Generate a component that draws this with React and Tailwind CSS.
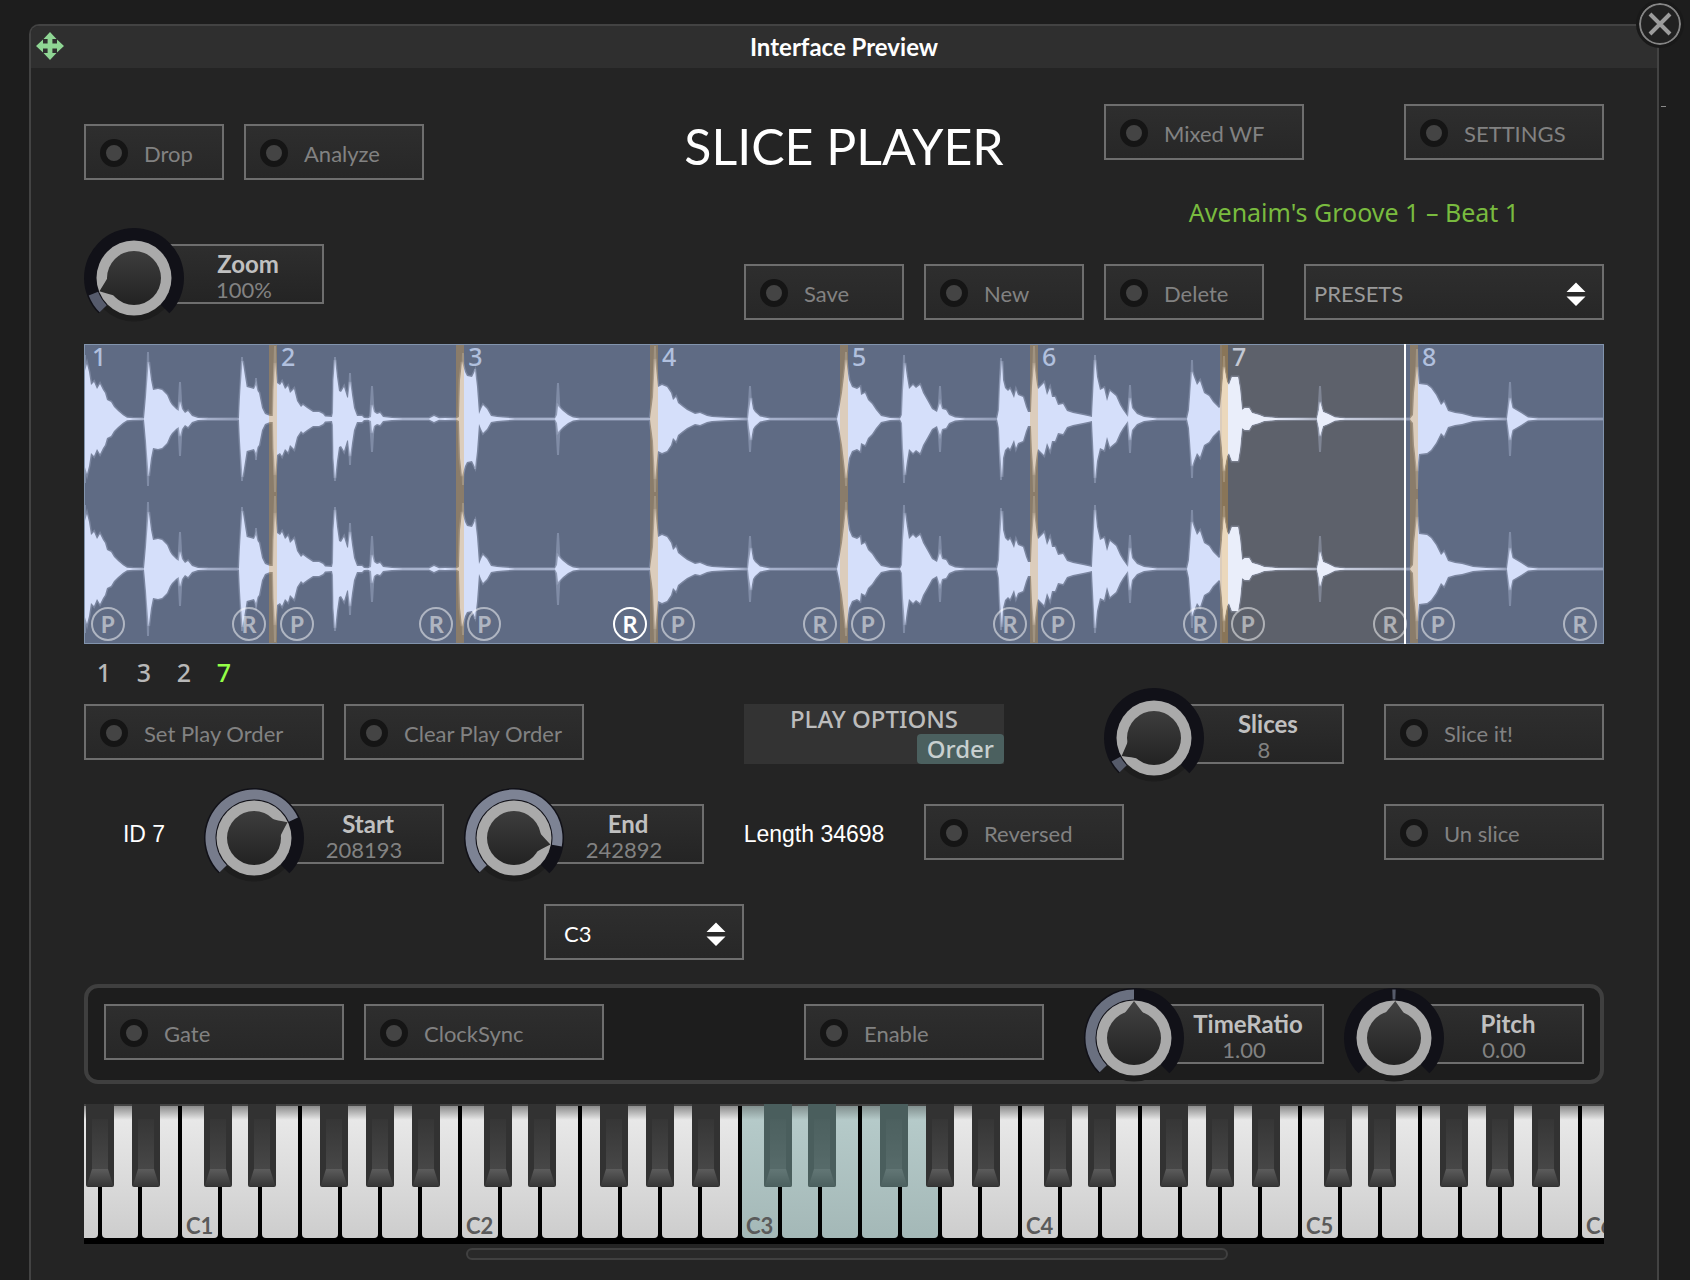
import React, { useState } from 'react';

// [x, height] pairs of the sample overview, in a 1520 wide space
const WAVE = [
  [0, 45], [3, 55], [5, 47], [7, 34], [10, 37], [13, 30], [16, 35], [19, 29], [21, 26], [23, 19], [27, 17], [30, 12], [34, 8], [39, 3.7], [43, 1.3], [49, 0.8], [58, 0.5],
  [60, 0.5], [62, 22], [64.7, 57], [67, 39], [69, 29], [74, 30], [78, 29], [83, 24], [86, 17], [88, 14], [92, 10], [94.7, 8], [96, 17], [98, 10], [101, 6], [104, 8], [108, 3], [114, 1], [124, 0.5], [153, 0.3],
  [155, 0.5], [156, 22], [158.5, 58], [160, 49], [162.7, 32], [170, 30], [172, 34], [173.5, 28], [175, 26], [178, 11], [181, 5], [186, 3], [189, 3], [189.5, 29], [191, 56], [193, 36], [196, 34], [198, 37], [201, 30], [204, 33], [206, 26], [210, 30], [213, 18], [217, 12], [219, 14], [223, 11], [229, 7], [235, 7], [239, 5], [241, 2.5], [248, 2],
  [249, 6], [249.5, 39], [251, 59], [253, 42], [255, 28], [257, 27], [260, 32], [263, 22], [264, 21], [266, 37], [268, 24], [270, 11], [273, 3], [278, 3], [280, 1], [284, 0.8], [287, 2], [288, 14], [290, 7], [293, 5], [296, 6], [299, 2], [308, 1], [319, 0.4], [345, 0.4], [350, 3], [355, 0.8], [361, 1], [372, 0.6],
  [375, 2], [376, 39], [378, 57], [381, 47], [383, 43], [388, 42], [391, 48], [393, 32], [395, 5], [397, 10], [399, 14], [403, 10], [407, 3], [413, 2], [419, 1.5], [431, 0.5], [471, 0.4], [473, 4], [474, 13], [479, 8], [484, 4], [489, 1.5], [496, 0.6],
  [566, 0.4], [569, 22], [571, 60], [574, 32], [578, 34], [583, 32], [587, 26], [589, 19], [592, 22], [594, 16], [599, 12], [603, 9], [607, 7], [611, 5], [616, 6], [623, 3], [628, 2], [641, 1.2], [658, 0.6], [664, 0.3], [665, 9], [667, 21], [669, 10], [671, 7], [676, 2.5], [686, 0.6],
  [753, 0.3], [755, 9], [758, 26], [762, 59], [765, 39], [768, 32], [773, 30], [776, 32], [777, 24], [781, 26], [784, 19], [788, 15], [792, 9], [797, 3], [806, 1], [816, 0.5], [818, 4], [819, 29], [821, 56], [823, 42], [825, 30], [829, 34], [832, 31], [836, 34], [839, 26], [843, 19], [848, 10], [853, 7], [856, 16], [858, 10], [862, 9], [865, 4], [871, 1.5], [881, 0.5],
  [913, 0.3], [915, 9], [916, 32], [918, 58], [919, 39], [921, 31], [924, 28], [926, 30], [930, 21], [932, 29], [934, 24], [939, 22], [942, 12], [944, 7], [947, 7], [948, 32], [950, 56], [953, 34], [954, 30], [960, 36], [963, 24], [966, 31], [968, 22], [971, 22], [974, 14], [979, 15], [983, 8], [989, 6], [999, 4], [1006, 2.5],
  [1008, 2], [1009, 22], [1011, 59], [1013, 42], [1016, 29], [1020, 31], [1023, 18], [1026, 28], [1032, 23], [1036, 14], [1039, 9], [1044, 2], [1046, 21], [1048, 11], [1053, 5], [1060, 2], [1073, 0.5], [1103, 0.3], [1105, 9], [1108, 47], [1113, 34], [1116, 38], [1120, 26], [1125, 23], [1129, 17], [1135, 11],
  [1136, 12], [1138, 29], [1140, 52], [1143, 37], [1145, 34], [1148, 42], [1154, 42], [1156, 30], [1158, 9], [1161, 11], [1165, 11], [1168, 6], [1175, 4], [1180, 2], [1194, 0.8], [1233, 0.3], [1235, 9], [1236, 17], [1239, 7], [1244, 5], [1251, 1.5], [1261, 0.5],
  [1326, 0.3], [1329, 4], [1330, 26], [1333, 52], [1335, 35], [1343, 34], [1347, 31], [1352, 24], [1357, 14], [1360, 17], [1364, 8], [1371, 6], [1378, 5], [1389, 2], [1402, 1], [1423, 0.3], [1426, 21], [1428.5, 11], [1437, 6], [1444, 1.5], [1454, 0.5], [1520, 0.3],
];

// peaks that stick out of the body, [x, height]
const PEAKS = [
  [1, 64], [64, 67], [96, 37], [158, 62], [172, 41], [191, 73], [251, 62], [266, 46], [288, 33], [379, 66], [391, 50],
  [474, 36], [571, 73], [666, 33], [762, 67], [820, 64], [856, 33], [917, 61], [950, 73], [1011, 64],
  [1046, 34], [1108, 59], [1140, 63], [1236, 33], [1333, 70], [1426, 37],
];

// share of the whole sample that each slice takes
const SLICES = [
  { id: 1, size: 189 },
  { id: 2, size: 187 },
  { id: 3, size: 194, reversed: true },
  { id: 4, size: 190 },
  { id: 5, size: 190 },
  { id: 6, size: 190 },
  { id: 7, size: 190, playing: true },
  { id: 8, size: 190 },
];

const MARKERS = [189, 376, 570, 760, 950, 1140, 1330];

function wavePath(center) {
  const top = WAVE.map(([x, h]) => `${x},${center - h}`);
  const bottom = [...WAVE].reverse().map(([x, h]) => `${x},${center + h}`);
  return `M${top.join(' L')} L${bottom.join(' L')} Z`;
}

function peakPath(center) {
  return PEAKS.map(([x, h]) => (
    `M${x - 3},${center} L${x - 1},${center - h} L${x + 1},${center - h} L${x + 3},${center} L${x + 1},${center + h} L${x - 1},${center + h} Z`
  )).join(' ');
}

function polar(deg, r) {
  const a = (deg * Math.PI) / 180;
  return [50 + r * Math.sin(a), 50 - r * Math.cos(a)];
}

function arcPath(from, to, r1, r2) {
  const large = to - from > 180 ? 1 : 0;
  return `M${polar(from, r2)} A${r2} ${r2} 0 ${large} 1 ${polar(to, r2)} L${polar(to, r1)} A${r1} ${r1} 0 ${large} 0 ${polar(from, r1)} Z`;
}

function LedButton({ children, className }) {
  return (
    <button
      type="button"
      className={`flex h-14 shrink-0 items-center border-2 border-[#6e6e6e] bg-linear-to-b from-[#2e2e2e] to-[#272727] pt-1 pb-0.5 pl-3.5 text-[22px] leading-[26px] whitespace-nowrap text-[#828282] ${className}`}
    >
      <span className="mr-4 size-7 rounded-full border-6 border-[#151515] bg-[#444444]" />
      <span className="pt-0.5">{children}</span>
    </button>
  );
}

function Knob({ id, label, text, angle, from = -135, color, value }) {
  const [current, setCurrent] = useState(value);
  const tip = polar(angle, 37);
  const notch = `M${tip} Q${polar(angle - 13, 29)} ${polar(angle - 23, 26)} L50,50 L${polar(angle + 23, 26)} Q${polar(angle + 13, 29)} ${tip} Z`;

  return (
    <div className="relative h-[60px] w-60 shrink-0">
      <div className="ml-[50px] flex h-full flex-col items-center border-2 border-[#6e6e6e] bg-linear-to-b from-[#2e2e2e] to-[#242424] pt-[5px] pl-[30px]">
        <label htmlFor={id} className="pl-2 text-[24px] leading-[26px] font-bold text-[#c0c0c0]">{label}</label>
        <output htmlFor={id} className="text-[22px] leading-[26px] text-[#828282]">{text}</output>
      </div>
      <svg viewBox="0 0 100 100" className="absolute -top-4 left-0 size-[100px]" aria-hidden="true">
        <defs>
          <linearGradient id={`${id}-body`} gradientUnits="userSpaceOnUse" x1="0" y1="13" x2="0" y2="78">
            <stop offset="0" stopColor="#424242" />
            <stop offset="1" stopColor="#222222" />
          </linearGradient>
        </defs>
        <circle cx="50" cy="50" r="43.5" fill="#1d1d1d" />
        <path d={arcPath(-135, 135, 36, 50)} fill="#111118" />
        <path d={arcPath(from, angle, 38.5, 48.5)} fill={color} />
        <circle cx="50" cy="50" r="37.5" fill="#aaaaaa" />
        <circle cx="50" cy="50" r="27" fill={`url(#${id}-body)`} />
        <path d={notch} fill={`url(#${id}-body)`} />
      </svg>
      <input
        id={id}
        type="range"
        min="0"
        max="100"
        value={current}
        onChange={(e) => setCurrent(Number(e.target.value))}
        className="absolute -top-4 left-0 size-[100px] cursor-pointer opacity-0"
      />
    </div>
  );
}

function Dropdown({ label, options, className, selectClass }) {
  return (
    <div className={`relative h-14 shrink-0 ${className}`}>
      <select
        aria-label={label}
        className={`size-full appearance-none border-2 border-[#6e6e6e] bg-linear-to-b from-[#2e2e2e] to-[#272727] pt-0.5 text-[22px] ${selectClass}`}
      >
        {options.map((o) => <option key={o}>{o}</option>)}
      </select>
      <svg viewBox="0 0 20 24" className="pointer-events-none absolute top-[18px] right-[18px] h-6 w-5" aria-hidden="true">
        <path d="M10 0.5 L19.5 10 H0.5 Z M0.5 14.5 H19.5 L10 24 Z" fill="#ffffff" />
      </svg>
    </div>
  );
}

function SliceTag({ letter, on }) {
  return (
    <button
      type="button"
      className={`flex size-[34px] items-center justify-center rounded-full border-2 font-['Noto_Sans',sans-serif] text-[24px] leading-[30px] font-semibold ${on ? 'border-white text-white' : 'border-white/50 text-white/50'}`}
    >
      {letter}
    </button>
  );
}

function Waveform() {
  return (
    <div className="relative mt-4 h-[300px] bg-[#5f6b84]">
      <svg viewBox="0 0 1520 300" preserveAspectRatio="none" className="block size-full" aria-hidden="true">
        <rect x="1138" y="0" width="183" height="300" fill="#5d616b" />
        {[75, 225].map((center) => (
          <g key={center}>
            <path d={peakPath(center)} fill="#d5dffa" fillOpacity="0.28" />
            <path d={wavePath(center)} fill="none" stroke="#d5dffa" strokeOpacity="0.22" strokeWidth="3" />
            <path d={wavePath(center)} fill="#d5dffa" />
          </g>
        ))}
        <g clipPath="url(#playing)">
          <path d={wavePath(75)} fill="#eaeefa" />
          <path d={wavePath(225)} fill="#eaeefa" />
        </g>
        <clipPath id="playing">
          <rect x="1138" y="0" width="183" height="300" />
        </clipPath>
        {MARKERS.map((x) => (
          <rect key={x} x={x - 4} y="0" width="8" height="300" fill="#f0a52d" fillOpacity="0.3" />
        ))}
        <rect x="0.5" y="0.5" width="1519" height="299" fill="none" stroke="#8294ad" />
        <rect x="1320" y="0" width="2" height="300" fill="#ffffff" />
      </svg>
      <div className="absolute inset-0 flex">
        {SLICES.map((s) => (
          <div key={s.id} className="flex basis-0 flex-col justify-between px-[7px] pb-[3px]" style={{ flexGrow: s.size }}>
            <span className={`pl-px font-['Noto_Sans',sans-serif] text-[25px] leading-[24px] font-medium ${s.playing ? 'text-[#c3c8d4]' : 'text-[#b1c0de]'}`}>{s.id}</span>
            <div className="flex justify-between">
              <SliceTag letter="P" />
              <SliceTag letter="R" on={s.reversed} />
            </div>
          </div>
        ))}
      </div>
    </div>
  );
}

// left edge of the black key, measured from the left edge of its white key
const BLACK_OFFSET = { C: 24, D: 28, F: 20, G: 26, A: 32 };

const WHITE_KEYS = ['G0', 'A0', 'B0'];
for (let octave = 1; octave <= 5; octave += 1) {
  ['C', 'D', 'E', 'F', 'G', 'A', 'B'].forEach((n) => WHITE_KEYS.push(n + octave));
}
WHITE_KEYS.push('C6');

const MAPPED_WHITE = ['C3', 'D3', 'E3', 'F3', 'G3'];
const MAPPED_BLACK = ['C3', 'D3', 'F3'];

function BlackKey({ note, mapped }) {
  return (
    <button
      type="button"
      aria-label={`${note} sharp`}
      className="absolute -top-0.5 z-10 h-[83px] w-7"
      style={{ left: BLACK_OFFSET[note[0]] }}
    >
      <svg viewBox="0 0 28 83" className="block h-[83px] w-7" aria-hidden="true">
        <path d="M0 0 H28 V81 Q28 83 26 83 H2 Q0 83 0 81 Z" fill="#323232" />
        <rect x="6" y="15" width="16" height="50" fill="url(#blackTop)" />
        <path d="M6 65 H22 L27 81 Q27 82 26 82 H2 Q1 82 1 81 Z" fill="url(#blackFront)" />
        {mapped && <path d="M0 0 H28 V81 Q28 83 26 83 H2 Q0 83 0 81 Z" fill="#6d9d9b" fillOpacity="0.41" />}
      </svg>
    </button>
  );
}

function Keyboard() {
  return (
    <div className="mt-5 h-[140px] overflow-hidden bg-black">
      <svg className="absolute size-0" aria-hidden="true">
        <defs>
          <linearGradient id="blackTop" x1="0" y1="0" x2="0" y2="1">
            <stop offset="0" stopColor="#363636" />
            <stop offset="1" stopColor="#474747" />
          </linearGradient>
          <linearGradient id="blackFront" x1="0" y1="0" x2="0" y2="1">
            <stop offset="0" stopColor="#5c5c5c" />
            <stop offset="1" stopColor="#373737" />
          </linearGradient>
        </defs>
      </svg>
      <div className="-ml-6 flex border-t-2 border-[#444444]">
        {WHITE_KEYS.map((note) => (
          <div key={note} className="relative h-[132px] w-10 shrink-0 px-0.5">
            <button
              type="button"
              aria-label={note}
              className={`flex size-full items-end justify-start rounded-b-[4px] pl-1 text-[22px] leading-[24px] font-bold text-[#5a5a5a] ${MAPPED_WHITE.includes(note)
                ? 'bg-[linear-gradient(#82908f,#b5cac9_14px,#a4b8b7)]'
                : 'bg-[linear-gradient(#8c8c8c,#e8e8e8_14px,#cdcdcd)]'}`}
            >
              {note[0] === 'C' && note}
            </button>
            {BLACK_OFFSET[note[0]] && note !== 'C6' && (
              <BlackKey note={note} mapped={MAPPED_BLACK.includes(note)} />
            )}
          </div>
        ))}
      </div>
    </div>
  );
}

function App() {
  return (
    <div className="relative flex min-h-screen flex-col overflow-hidden bg-[#1d1d1d] pt-6 pr-[31px] pl-[29px] font-['Lato',sans-serif]">
      <div className="relative flex grow flex-col rounded-t-[10px] border-2 border-b-0 border-[#434343] bg-[#242424]">
        <header className="relative flex h-[42px] items-center justify-center rounded-t-lg bg-[#2f2f2f]">
          <button type="button" aria-label="Move" className="absolute top-1.5 left-[5px]">
            <svg viewBox="0 0 28 28" className="size-7" aria-hidden="true">
              <path
                d="M14 0 L20.5 7 H16.4 V11.6 H21 V7.5 L28 14 L21 20.5 V16.4 H16.4 V21 H20.5 L14 28 L7.5 21 H11.6 V16.4 H7 V20.5 L0 14 L7 7.5 V11.6 H11.6 V7 H7.5 Z"
                fill="#8fd694"
              />
            </svg>
          </button>
          <h2 className="text-[24px] leading-[28px] font-bold text-white">Interface Preview</h2>
        </header>

        <main className="px-[53px] pt-9">
          <div className="grid grid-cols-[1fr_auto_1fr]">
            <div className="flex gap-5 pt-5">
              <LedButton className="w-[140px]">Drop</LedButton>
              <LedButton className="w-[180px]">Analyze</LedButton>
            </div>
            <h1 className="pt-3 text-[50px] leading-[60px] text-white">SLICE PLAYER</h1>
            <div className="flex justify-end gap-[100px]">
              <LedButton className="w-[200px]">Mixed WF</LedButton>
              <LedButton className="w-[200px]">SETTINGS</LedButton>
            </div>
          </div>

          <div className="flex justify-between">
            <div className="pt-16">
              <Knob id="zoom" label="Zoom" text="100%" angle={-111} value={9} color="#565b6c" />
            </div>
            <div className="flex flex-col pt-[18px] pb-2">
              <p className="w-[500px] self-end text-center font-['Noto_Sans',sans-serif] text-[25px] leading-[28px] text-[#79bb3f]">
                Avenaim's Groove 1 – Beat 1
              </p>
              <div className="mt-[38px] flex gap-5">
                <LedButton className="w-40">Save</LedButton>
                <LedButton className="w-40">New</LedButton>
                <LedButton className="w-40">Delete</LedButton>
                <Dropdown label="Presets" options={['PRESETS']} className="ml-5 w-[300px]" selectClass="pl-2 text-[#9a9a9a]" />
              </div>
            </div>
          </div>

          <Waveform />

          <ol className="mt-3.5 flex h-[30px] font-['Noto_Sans',sans-serif] text-[25px] leading-[28px] font-medium text-[#b8b8b8]">
            <li className="w-10 text-center">1</li>
            <li className="w-10 text-center">3</li>
            <li className="w-10 text-center">2</li>
            <li className="w-10 text-center text-[#94ff47]">7</li>
          </ol>

          <div className="mt-4 flex h-[60px]">
            <div className="flex gap-5">
              <LedButton className="w-60">Set Play Order</LedButton>
              <LedButton className="w-60">Clear Play Order</LedButton>
            </div>
            <div className="ml-40 flex w-[260px] flex-col bg-[#333333] font-['Noto_Sans',sans-serif] text-[24px] leading-[30px] font-medium">
              <span className="text-center text-[#bcbcbc]">PLAY OPTIONS</span>
              <button type="button" className="self-end rounded-[4px] bg-[#4b605f] px-2.5 text-[#c8d0d0]">Order</button>
            </div>
            <div className="ml-auto flex gap-10">
              <Knob id="slices" label="Slices" text="8" angle={-119} value={6} color="#565b6a" />
              <LedButton className="w-[220px]">Slice it!</LedButton>
            </div>
          </div>

          <div className="mt-10 flex h-[60px] font-['Liberation_Sans',sans-serif] text-[23px] leading-[60px] text-white">
            <span className="w-[120px] text-center">ID 7</span>
            <div className="flex gap-5 font-['Lato',sans-serif]">
              <Knob id="start" label="Start" text="208193" angle={65} value={74} color="#777c8c" />
              <Knob id="end" label="End" text="242892" angle={100} value={87} color="#7d8394" />
            </div>
            <span className="w-[220px] text-center">Length 34698</span>
            <div className="flex grow justify-between font-['Lato',sans-serif]">
              <LedButton className="w-[200px]">Reversed</LedButton>
              <LedButton className="w-[220px]">Un slice</LedButton>
            </div>
          </div>

          <div className="mt-10 pl-[460px]">
            <Dropdown label="Root note" options={['C3']} className="w-[200px]" selectClass="pl-[18px] text-white" />
          </div>

          <section className="mt-6 flex rounded-[14px] border-4 border-[#3f3f3f] bg-[#1d1d1d] p-4">
            <div className="flex gap-5">
              <LedButton className="w-60">Gate</LedButton>
              <LedButton className="w-60">ClockSync</LedButton>
            </div>
            <LedButton className="ml-[200px] w-60">Enable</LedButton>
            <div className="ml-auto flex gap-5">
              <Knob id="time-ratio" label="TimeRatio" text="1.00" angle={0} value={50} color="#6a7080" />
              <Knob id="pitch" label="Pitch" text="0.00" angle={2} from={-2} value={50} color="#565b6a" />
            </div>
          </section>

          <Keyboard />
          <div className="mt-1 ml-[382px] h-3 w-[762px] rounded-md border-2 border-[#404040] bg-[#292929]" />
        </main>

        <button
          type="button"
          aria-label="Close"
          className="absolute -top-[23px] -right-6 flex size-[42px] items-center justify-center rounded-full border-2 border-[#858585] bg-[#212121] outline-3 outline-[#191919]"
        >
          <svg viewBox="0 0 24 24" className="size-6" aria-hidden="true">
            <path d="M2 2 L22 22 M22 2 L2 22" stroke="#9c9c9c" strokeWidth="4" />
          </svg>
        </button>
        <span className="absolute top-20 -right-[9px] h-px w-[5px] bg-[#8a8a8a]" />
      </div>
    </div>
  );
}

export default App;
